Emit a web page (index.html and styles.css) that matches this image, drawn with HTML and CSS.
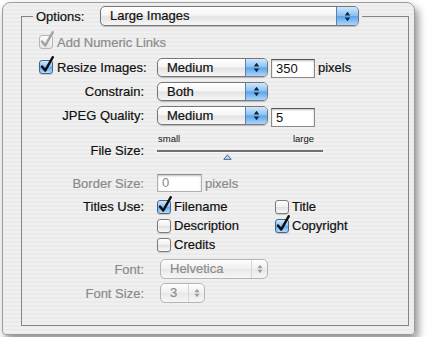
FILE: index.html
```html
<!DOCTYPE html>
<html lang="en">
<head>
    <meta charset="UTF-8">
    <title>Options</title>
    <link rel="stylesheet" href="styles.css">
</head>
<body>
    <svg class="defs" width="0" height="0">
        <symbol id="tick" viewBox="0 0 16 18">
            <path d="M3 10.5 6.2 14.6 13.8 1.2" fill="none" stroke-width="2.4" stroke-linecap="round" stroke-linejoin="round"/>
        </symbol>
        <symbol id="arrows" viewBox="0 0 7 12">
            <path d="M0.5 5 3.5 0.8 6.5 5Z M0.5 7 3.5 11.2 6.5 7Z"/>
        </symbol>
    </svg>

    <div class="window">
        <fieldset class="group">
            <legend>
                <div class="legend-row">
                    <span class="legend-label">Options:</span>
                    <div class="popup wide">
                        <span class="val">Large Images</span>
                        <span class="arr"><svg><use href="#arrows"/></svg></span>
                    </div>
                </div>
            </legend>

            <div class="row r-add">
                <label class="check dim">
                    <span class="cb on-dis"><svg class="tick"><use href="#tick"/></svg></span>Add Numeric Links
                </label>
            </div>

            <div class="row r-resize">
                <label class="check first-col">
                    <span class="cb on"><svg class="tick"><use href="#tick"/></svg></span>Resize Images:
                </label>
                <div class="popup med">
                    <span class="val">Medium</span>
                    <span class="arr"><svg><use href="#arrows"/></svg></span>
                </div>
                <span class="field low">350</span>
                <span class="unit">pixels</span>
            </div>

            <div class="row r-constrain">
                <span class="lbl">Constrain:</span>
                <div class="popup med">
                    <span class="val">Both</span>
                    <span class="arr"><svg><use href="#arrows"/></svg></span>
                </div>
            </div>

            <div class="row r-jpeg">
                <span class="lbl">JPEG Quality:</span>
                <div class="popup med">
                    <span class="val">Medium</span>
                    <span class="arr"><svg><use href="#arrows"/></svg></span>
                </div>
                <span class="field lower">5</span>
            </div>

            <div class="row slider-row">
                <span class="lbl">File Size:</span>
                <div class="slider">
                    <div class="ends"><span>small</span><span>large</span></div>
                    <div class="track"></div>
                    <svg class="thumb" viewBox="0 0 9 6"><path d="M0.8 5.4 4.5 0.8 8.2 5.4Z"/></svg>
                </div>
            </div>

            <div class="row r-border">
                <span class="lbl dim">Border Size:</span>
                <span class="field dis">0</span>
                <span class="unit dim">pixels</span>
            </div>

            <div class="titles">
                <span class="lbl">Titles Use:</span>
                <div class="opts">
                    <label class="check"><span class="cb on"><svg class="tick"><use href="#tick"/></svg></span>Filename</label>
                    <label class="check"><span class="cb"></span>Title</label>
                    <label class="check"><span class="cb"></span>Description</label>
                    <label class="check"><span class="cb on"><svg class="tick"><use href="#tick"/></svg></span>Copyright</label>
                    <label class="check"><span class="cb"></span>Credits</label>
                </div>
            </div>

            <div class="row r-font">
                <span class="lbl dim">Font:</span>
                <div class="popup dis font">
                    <span class="val">Helvetica</span>
                    <span class="arr"><svg><use href="#arrows"/></svg></span>
                </div>
            </div>

            <div class="row r-size">
                <span class="lbl dim">Font Size:</span>
                <div class="popup dis size">
                    <span class="val">3</span>
                    <span class="arr"><svg><use href="#arrows"/></svg></span>
                </div>
            </div>
        </fieldset>
    </div>
</body>
</html>
```

FILE: styles.css
```css
body {
    margin: 0;
    padding: 2px;
    background: #fff;
    font-family: "Liberation Sans", Arial, sans-serif;
    font-size: 13px;
    color: #111;
    -webkit-text-stroke: 0.2px;
}
.defs { position: absolute; width: 0; height: 0; }

.window {
    width: 413px;
    height: 333px;
    box-sizing: border-box;
    padding-top: 3px;
    border: 1px solid #9d9d9d;
    border-radius: 8px 8px 4px 4px;
    background: repeating-linear-gradient(#f0f0f0 0 2px, #eaeaea 2px 4px);
    box-shadow: 3px 5px 9px rgba(0, 0, 0, 0.45);
}

.group {
    margin: 0 5px 0 18px;
    padding: 6px 0 22px 17px;
    border: 1px solid #858585;
    min-width: 0;
}
.group legend {
    padding: 0 3px;
    margin-left: -6px;
}
.legend-row { display: flex; align-items: center; height: 20px; }
.legend-label { width: 64px; }

.row { display: flex; align-items: center; height: 20px; }
.r-resize { margin-top: 5px; }
.r-constrain, .r-jpeg { margin-top: 4px; }
.slider-row { margin-top: 8px; height: 30px; align-items: flex-start; }
.r-border { margin-top: 10px; }
.r-font { margin-top: 5px; }
.r-size { margin-top: 4px; }

.lbl {
    width: 118px;
    flex: none;
    box-sizing: border-box;
    padding-right: 13px;
    text-align: right;
}
.dim { color: #8a8a8a; }

/* checkboxes */
.check { display: flex; align-items: center; gap: 4px; }
.first-col { width: 118px; flex: none; }
.cb {
    position: relative;
    flex: none;
    width: 14px;
    height: 14px;
    box-sizing: border-box;
    border: 1px solid #7b7b7b;
    border-radius: 3px;
    background: linear-gradient(#fff, #efefef 50%, #e0e0e0 51%, #f9f9f9);
    box-shadow: 0 1px 1px rgba(0, 0, 0, 0.15);
}
.cb.on {
    border-color: #40658f;
    background: linear-gradient(#d4e9fd, #86bff2 50%, #5fa5ea 51%, #b7ddfd);
}
.cb.on-dis {
    border-color: #b6b6b6;
    background: linear-gradient(#fbfbfb, #e6e6e6);
    box-shadow: none;
}
.tick {
    position: absolute;
    left: -1px;
    top: -5px;
    width: 16px;
    height: 18px;
    stroke: #0e0e0e;
}
.on-dis .tick { stroke: #a2a2a2; }

/* popup buttons */
.popup {
    display: flex;
    flex: none;
    height: 19px;
    box-sizing: border-box;
    border: 1px solid #777;
    border-radius: 5px;
    overflow: hidden;
    background: linear-gradient(#fff, #f5f5f5 45%, #e3e3e3 55%, #f6f6f6);
    box-shadow: 0 1px 1px rgba(0, 0, 0, 0.2);
}
.popup .val { flex: 1; padding-left: 9px; line-height: 17px; }
.popup .arr {
    width: 21px;
    display: flex;
    align-items: center;
    justify-content: center;
    border-left: 1px solid #5a80ae;
    background: linear-gradient(#d0e7fc, #88c1f3 48%, #5aa2ea 52%, #abd7fd);
    fill: #16243a;
    -webkit-text-stroke: 0;
}
.popup .arr svg { width: 7px; height: 11px; }
.popup.wide { width: 259px; height: 20px; }
.popup.wide .val { line-height: 18px; }
.popup.med { width: 111px; }

.popup.dis {
    margin-left: 3px;
    height: 20px;
    border-color: #b5b5b5;
    background: linear-gradient(#fdfdfd, #efefef 50%, #e8e8e8 51%, #f6f6f6);
    box-shadow: none;
    color: #8c8c8c;
}
.popup.dis .val { line-height: 18px; }
.popup.dis .arr {
    width: 15px;
    background: none;
    border-left: 1px solid #d6d6d6;
    fill: #9c9c9c;
}
.popup.dis .arr svg { width: 6px; height: 10px; }
.popup.font { width: 108px; }
.popup.size { width: 45px; }

/* text fields */
.field {
    width: 44px;
    height: 19px;
    box-sizing: border-box;
    margin-left: 3px;
    padding-left: 4px;
    border: 1px solid #8a8a8a;
    border-top-color: #555;
    background: #fff;
    box-shadow: inset 0 1px 2px rgba(0, 0, 0, 0.25);
    line-height: 17px;
    font-size: 13px;
    -webkit-text-stroke: 0;
}
.field.low { margin-top: 2px; }
.field.lower { margin-top: 4px; }
.field.dis {
    width: 45px;
    height: 18px;
    margin-left: 0;
    border-color: #b0b0b0;
    border-top-color: #8e8e8e;
    color: #8a8a8a;
    line-height: 16px;
}
.unit { margin-left: 3px; }

/* slider */
.slider-row .lbl { margin-top: 10px; line-height: 16px; }
.slider { width: 166px; }
.ends {
    display: flex;
    justify-content: space-between;
    height: 12px;
    padding: 0 9px 0 1px;
    font-size: 9.5px;
    line-height: 12px;
    -webkit-text-stroke: 0;
}
.track {
    height: 2px;
    margin-top: 5px;
    background: #6f6f6f;
    border-bottom: 1px solid #fafafa;
}
.thumb {
    display: block;
    width: 9px;
    height: 6px;
    margin: 1px 0 0 66px;
    fill: #b9d6f2;
    stroke: #4f6f93;
    stroke-width: 1;
}

/* titles */
.titles { display: flex; margin-top: 4px; }
.titles .lbl { line-height: 19px; }
.opts {
    display: grid;
    grid-template-columns: 118px auto;
    grid-auto-rows: 19px;
    align-items: center;
}
.opts .check { gap: 3px; }
```
